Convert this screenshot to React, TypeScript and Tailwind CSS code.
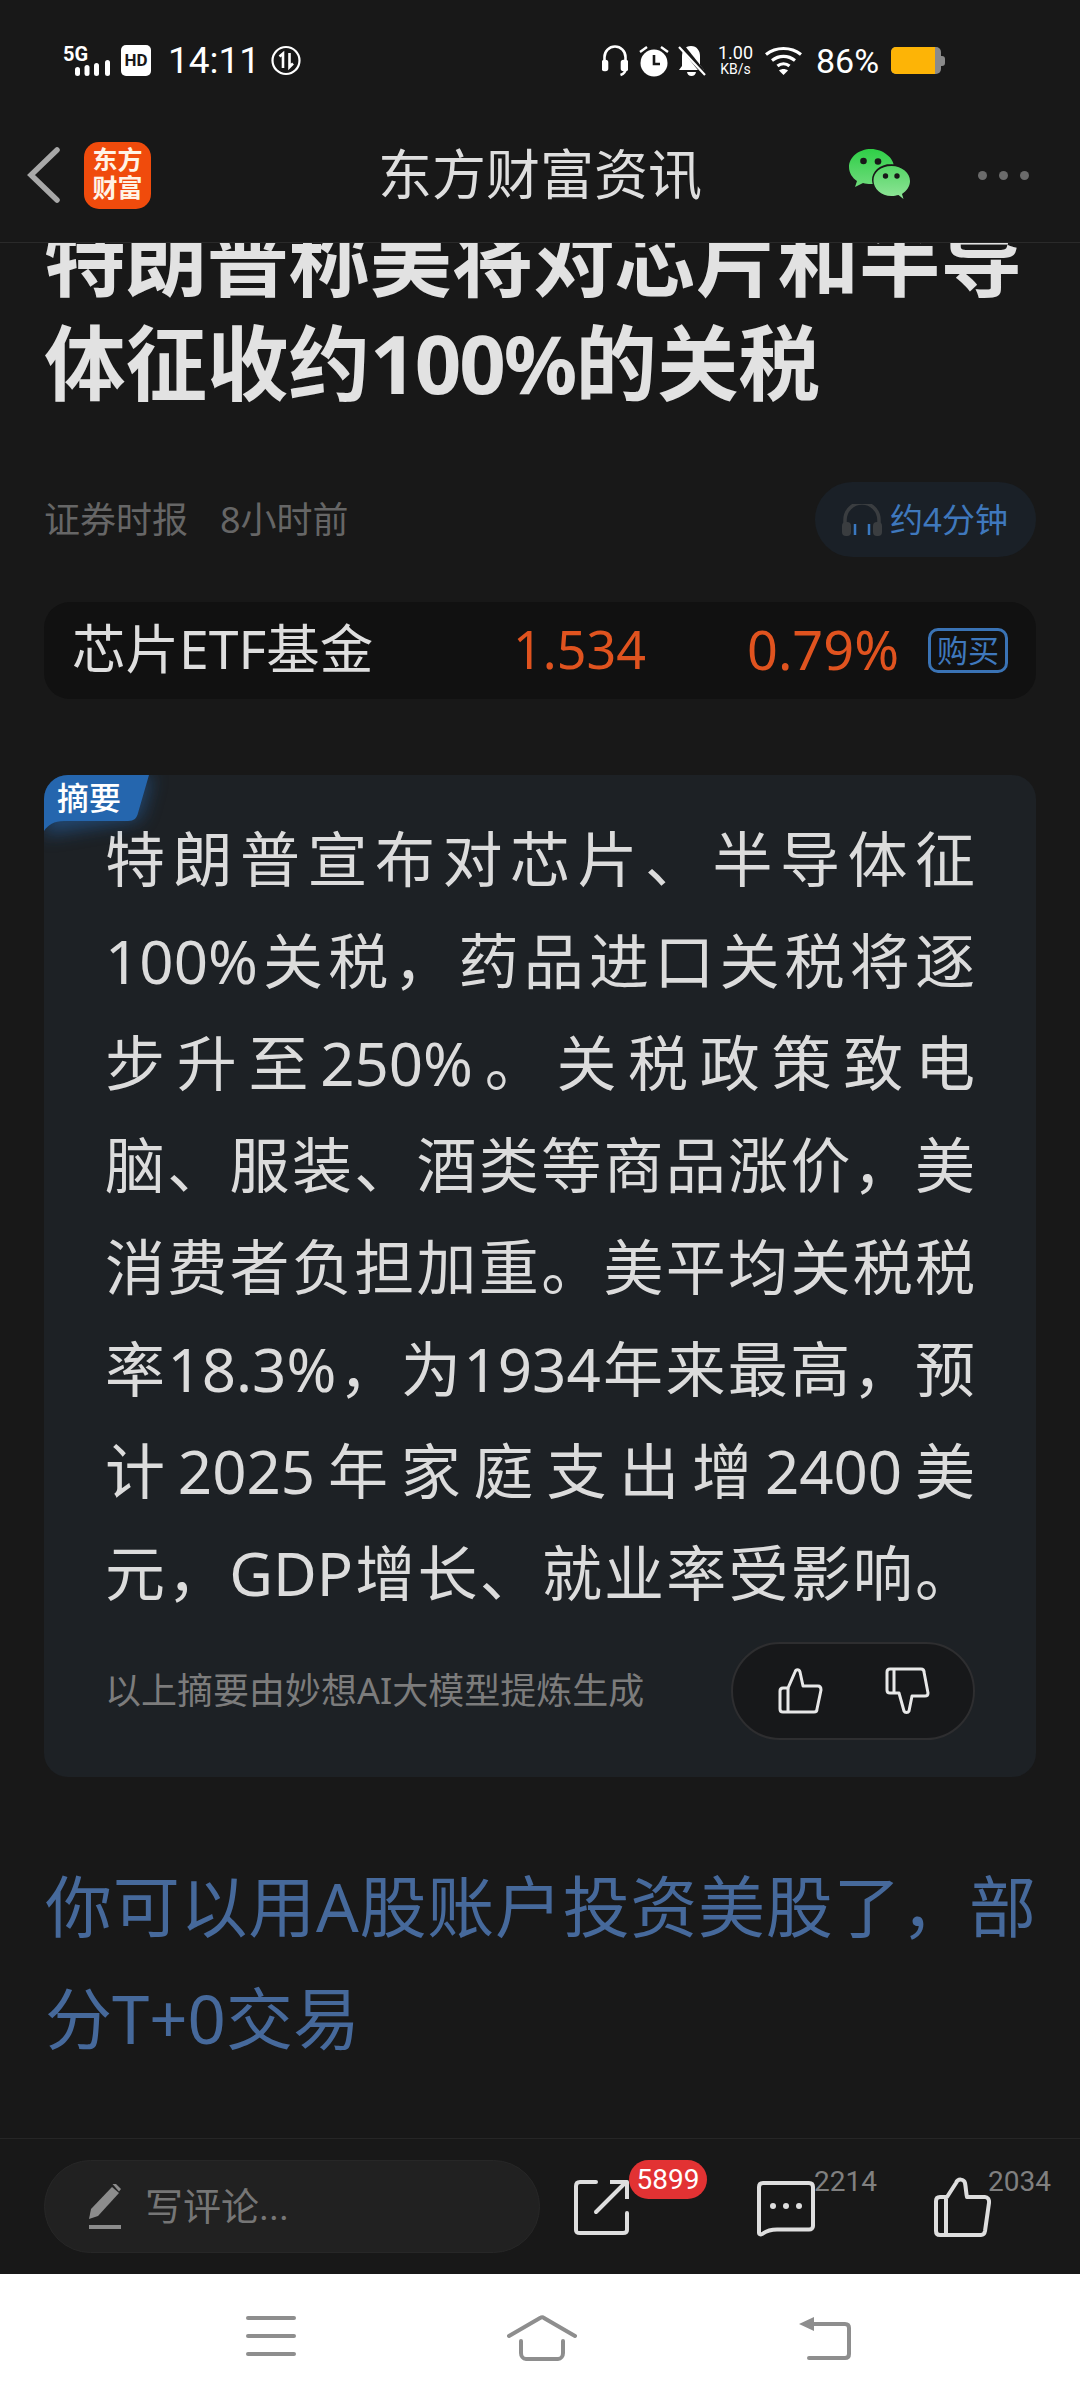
const SUMMARY_LINES = [
  '特朗普宣布对芯片、半导体征',
  '100%关税，药品进口关税将逐',
  '步升至250%。关税政策致电',
  '脑、服装、酒类等商品涨价，美',
  '消费者负担加重。美平均关税税',
  '率18.3%，为1934年来最高，预',
  '计2025年家庭支出增2400美',
  '元，GDP增长、就业率受影响。',
]

function StatusBar() {
  return (
    <div className="h-[108px] shrink-0 flex items-start justify-between pt-[44px] pl-[63px] pr-[135px] text-white">
      <div className="flex items-center">
        <svg className="overflow-visible" width="48" height="32" viewBox="0 0 48 32" fill="white">
          <text x="0" y="15.500" fontSize="20" fontWeight="700" fontFamily="Roboto, sans-serif">5G</text>
          <rect x="12" y="22" width="5" height="9" rx="2.500" />
          <rect x="21.500" y="20" width="5" height="11" rx="2.500" />
          <rect x="31" y="18" width="5" height="13" rx="2.500" />
          <rect x="42" y="15" width="5" height="16" rx="2.500" />
        </svg>
        <div className="ml-[10px] w-[30px] h-[31px] rounded-[5px] bg-white flex items-center justify-center text-[#181818] text-[17px] font-bold leading-none">HD</div>
        <span className="ml-[17px] text-[37px] leading-[33px] w-[88px]">14:11</span>
        <svg className="ml-[15px]" width="30" height="31" viewBox="0 0 30 31" fill="none" stroke="white" strokeWidth="2.200">
          <circle cx="15" cy="15.500" r="13.500" />
          <path d="M12 23V8.500L8.500 11.500M18.500 8v14l3.500-3.500" strokeWidth="2.600" />
        </svg>
      </div>
      <div className="flex items-center">
        <svg width="26" height="32" viewBox="0 0 26 32" fill="none" stroke="white" strokeWidth="2.600">
          <path d="M2.500 20V12a10.500 10.500 0 0 1 21 0v12c0 3-2 5-5 6" />
          <rect x="1" y="16" width="4" height="9" rx="1.500" fill="white" />
          <rect x="20" y="16" width="5" height="9" rx="1.500" fill="white" />
        </svg>
        <svg className="ml-[10px]" width="32" height="32" viewBox="0 0 32 32">
          <circle cx="16" cy="18" r="13.500" fill="white" />
          <path d="M16 10v9h6" fill="none" stroke="#181818" strokeWidth="2.600" />
          <path d="M2 7l7-5M30 7l-7-5" stroke="white" strokeWidth="2.400" />
        </svg>
        <svg className="ml-[8px]" width="28" height="32" viewBox="0 0 28 32">
          <path d="M13 1c6 0 9 5 9 10v9l4 5H1l3-4v-10c0-5 3-10 9-10zM9 27h9c-.5 2.500-2 4-4.500 4S9.500 29.500 9 27z" fill="white" />
          <path d="M3 0l24 30" stroke="#181818" strokeWidth="5" />
          <path d="M1 2l26 28" stroke="white" strokeWidth="2.200" />
        </svg>
        <div className="ml-[11px] w-[37px] flex flex-col items-center">
          <span className="text-[18px] leading-[18px]">1.00</span>
          <span className="text-[14px] leading-[15px]">KB/s</span>
        </div>
        <svg className="ml-[11px]" width="37" height="30" viewBox="0 0 37 30" fill="none" stroke="white" strokeWidth="3.200">
          <path d="M1 8.500C11 .5 26 .5 36 8.500" />
          <path d="M7 14.500c7-5.500 16-5.500 23 0" />
          <path d="M12.500 20c3.500-3 8.500-3 12 0" />
          <path d="M18.500 29l-4.500-4.500c2.500-2 6.500-2 9 0z" fill="white" stroke="none" />
        </svg>
        <span className="ml-[14px] text-[34px] leading-[32px] w-[62px]">86%</span>
        <div className="ml-[13px] flex items-center">
          <div className="w-[50px] h-[27px] rounded-[5px] bg-[#8a8a8a] overflow-hidden">
            <div className="w-[44px] h-full bg-[#fdb406]" />
          </div>
          <div className="w-[4px] h-[10px] rounded-r-[3px] bg-[#8a8a8a]" />
        </div>
      </div>
    </div>
  )
}

function NavBar() {
  return (
    <div className="relative h-[135px] shrink-0 flex items-center border-b border-[#2a2a2a]">
      <svg className="ml-[27px]" width="33" height="56" viewBox="0 0 33 56" fill="none" stroke="#a8a8a8" strokeWidth="5.500" strokeLinecap="round">
        <path d="M30 3L4 28l26 25" />
      </svg>
      <div className="ml-[24px] w-[67px] h-[67px] rounded-[15px] bg-[#f04b0c] flex flex-col items-center justify-center text-[#fff3e6] text-[25px] leading-[28px] font-bold">
        <span>东方</span>
        <span>财富</span>
      </div>
      <div className="absolute left-0 right-0 top-[33px] text-center text-[54px] leading-[72px] text-[#dedede]">东方财富资讯</div>
      <svg className="ml-auto" width="62" height="52" viewBox="0 0 62 52">
        <defs>
          <linearGradient id="wxa" x1="0" y1="0" x2="0" y2="1">
            <stop offset="0" stopColor="#2fcf47" />
            <stop offset="1" stopColor="#6fdc7c" />
          </linearGradient>
          <linearGradient id="wxb" x1="0" y1="0" x2="0" y2="1">
            <stop offset="0" stopColor="#55d566" />
            <stop offset="1" stopColor="#90e598" />
          </linearGradient>
        </defs>
        <path d="M22 0C10 0 0 8 0 18c0 6 3.500 11 8 14l-2 6 8-4c2.500.7 5 1 8 1 12 0 23-8 23-17S34 0 22 0z" fill="url(#wxa)" />
        <circle cx="14.500" cy="12" r="3.300" fill="#181818" />
        <circle cx="29" cy="12.500" r="3.300" fill="#181818" />
        <path d="M42.500 15C30 15 23 23 23 31s8 16 19.500 16c2.500 0 4.500-.3 6.500-1l6 4-1.500-5.500c4.500-3 8-7.500 8-13.500 0-8-8.500-16-19.500-16z" fill="#181818" />
        <path d="M42.500 17C31.500 17 24.500 23.500 24.500 31.500S32 47 42.500 47c2.500 0 5-.5 7-1l5 4-1.500-5c4.500-3 8-7.500 8-13 0-8-8-15-18.500-15z" fill="url(#wxb)" />
        <circle cx="36.500" cy="27" r="2.700" fill="#181818" />
        <circle cx="48" cy="27" r="2.700" fill="#181818" />
      </svg>
      <div className="ml-[67px] mr-[51px] flex gap-[12px]">
        <div className="w-[9px] h-[9px] rounded-full bg-[#6b6b6b]" />
        <div className="w-[9px] h-[9px] rounded-full bg-[#6b6b6b]" />
        <div className="w-[9px] h-[9px] rounded-full bg-[#6b6b6b]" />
      </div>
    </div>
  )
}

function ThumbUp({ className }: { className?: string }) {
  return (
    <svg className={className} width="46" height="46" viewBox="0 0 46 46" fill="none" stroke="#e8e8e8" strokeWidth="3" strokeLinejoin="round">
      <path d="M11 20h-5c-2 0-3 1-3 3v18c0 2 1 3 3 3h31c2 0 3-1 3-3l4-19c0-2-1-4-3-4H26l-3-14c-1-3-4-3-5 0z" />
      <path d="M11 20v24" />
    </svg>
  )
}

function ThumbDown({ className }: { className?: string }) {
  return (
    <svg className={className} width="48" height="48" viewBox="0 0 48 48" fill="none" stroke="#e8e8e8" strokeWidth="3" strokeLinejoin="round">
      <path d="M4 5c0-2 1-3 3-3h31c2 0 3 1 3 3l4 21c0 2-1 3-3 3H29l-3 15c-1 2-4 2-5 0l-5-18H7c-2 0-3-1-3-3z" />
      <path d="M11 3v23" />
    </svg>
  )
}

function Summary() {
  return (
    <div className="relative mt-[76px] mx-[44px] h-[1002px] rounded-[24px] bg-[#1d2125] pt-[33px] pl-[61px] pr-[61px] overflow-hidden">
      {/* tag */}
      <svg className="absolute left-0 top-0" width="170" height="110" viewBox="0 0 170 110">
        <defs>
          <filter id="tagBlur" x="-30%" y="-30%" width="160%" height="160%">
            <feGaussianBlur stdDeviation="9" />
          </filter>
        </defs>
        <path d="M0 0H108L96 44 0 60z" fill="#2566ae" opacity="0.55" filter="url(#tagBlur)" />
        <path d="M0 0H105L94 38c-1 5-4 8-10 8H20C10 46 4 50 0 56z" fill="#2566ae" />
      </svg>
      <span className="absolute left-[13px] top-[3px] text-[32px] leading-[40px] text-white font-medium">摘要</span>
      <div className="text-[60px] leading-[102px] text-[#dcdcdc]">
        {SUMMARY_LINES.map((line) => (
          <div key={line} className="text-justify [text-align-last:justify] whitespace-nowrap">{line}</div>
        ))}
      </div>
      <div className="mt-[18px] flex items-center justify-between">
        <span className="text-[36px] leading-[46px] text-[#7c7c7c]">以上摘要由妙想AI大模型提炼生成</span>
        <div className="w-[244px] h-[98px] rounded-full bg-[#17181a] border-2 border-[#2e2e30] flex items-center pl-[44px]">
          <ThumbUp />
          <ThumbDown className="ml-[60px]" />
        </div>
      </div>
    </div>
  )
}

function BottomBar() {
  return (
    <div className="relative h-[136px] shrink-0 border-t border-[#262626] bg-[#181818] flex items-center pl-[44px]">
      <div className="w-[496px] h-[93px] rounded-full bg-[#212121] border border-[#272727] flex items-center pl-[43px]">
        <svg width="34" height="46" viewBox="0 0 34 46" fill="#8c8c8c">
          <path d="M24 3l7 6-21 23-9 3 2-10z" />
          <path d="M24.500 0l2.500-1 6 6-2 2.500z" />
          <rect x="1" y="41" width="32" height="4" />
        </svg>
        <span className="ml-[23px] text-[38px] leading-[48px] text-[#767676]">写评论...</span>
      </div>
      <svg className="ml-[34px]" width="56" height="56" viewBox="0 0 56 56" fill="none" stroke="#dedede" strokeWidth="4" strokeLinecap="round" strokeLinejoin="round">
        <path d="M22 3H6C3.500 3 2 4.500 2 7v44c0 2.500 1.500 3 4 3h43c2 0 4-.5 4-3V34" />
        <path d="M22 33L52 3" />
        <path d="M36 3h17v17" strokeLinecap="butt" />
      </svg>
      <div className="absolute left-[629px] top-[21px] w-[78px] h-[39px] rounded-full bg-[#e23233] flex items-center justify-center text-[28px] leading-none text-white">5899</div>
      <svg className="ml-[127px] mt-[6px]" width="58" height="58" viewBox="0 0 58 58" fill="none" stroke="#dedede" strokeWidth="4" strokeLinejoin="round">
        <path d="M6 2h46c2.500 0 4 1.500 4 4v39c0 2-1.500 3.500-4 3.500H20c-6 0-10 1-14 4-2 1.500-4 1-4-1V6c0-2.500 1.500-4 4-4z" />
        <circle cx="16" cy="25" r="3" fill="#dedede" stroke="none" />
        <circle cx="29" cy="25" r="3" fill="#dedede" stroke="none" />
        <circle cx="42" cy="25" r="3" fill="#dedede" stroke="none" />
      </svg>
      <span className="absolute left-[814px] top-[25px] text-[28px] leading-[36px] text-[#808080]">2214</span>
      <svg className="ml-[119px]" width="57" height="60" viewBox="0 0 57 60" fill="none" stroke="#dedede" strokeWidth="4" strokeLinejoin="round">
        <path d="M13 20H6c-3 0-4 1.500-4 4v30c0 2.500 1.500 4 4 4h41c2.500 0 3.500-1 4-4l4-28c.5-3.500-1.500-6-4-6H33c-1-4-1-9-2-14-1-4-7-5-9 0z" />
        <path d="M12 22v35" />
      </svg>
      <span className="absolute left-[988px] top-[25px] text-[28px] leading-[36px] text-[#808080]">2034</span>
    </div>
  )
}

function SystemNav() {
  return (
    <div className="h-[126px] shrink-0 bg-white flex items-start pt-[41px] pl-[246px]">
      <div className="w-[50px] flex flex-col gap-[14px] mt-[1px]">
        <div className="h-[4px] rounded-full bg-[#8e8e8e]" />
        <div className="h-[4px] rounded-full bg-[#8e8e8e]" />
        <div className="h-[4px] rounded-full bg-[#8e8e8e]" />
      </div>
      <svg className="ml-[211px]" width="70" height="46" viewBox="0 0 70 46" fill="none" stroke="#8e8e8e" strokeWidth="4" strokeLinecap="round">
        <path d="M2 21L33 3c1.500-.8 3-.8 4 0l31 18" />
        <path d="M14 26v12c0 3 2 6 5 6h32c3 0 5-3 5-6V26" />
      </svg>
      <svg className="ml-[222px]" width="52" height="46" viewBox="0 0 52 46" fill="none" stroke="#8e8e8e" strokeWidth="4" strokeLinecap="round">
        <path d="M10 9h36c2.500 0 4 1.500 4 4v26c0 3-1.500 4-4 4H10" />
        <path d="M15 2v14L0 9z" fill="#8e8e8e" stroke="none" />
      </svg>
    </div>
  )
}

export default function App() {
  return (
    <div
      className="w-[1080px] h-[2400px] flex flex-col bg-[#181818] overflow-hidden"
      style={{ fontFamily: 'Roboto, "Noto Sans CJK SC", sans-serif' }}
    >
      <StatusBar />
      <NavBar />
      <div className="flex-1 min-h-0 overflow-hidden [font-family:'Noto_Sans','Noto_Sans_CJK_SC',sans-serif]">
        <h1 className="-mt-[36px] px-[44px] text-[81.500px] leading-[104px] font-bold text-[#e2e2e2]">
          <div>特朗普称美将对芯片和半导</div>
          <div>体征收约<span className="tracking-[-2px]">100%</span>的关税</div>
        </h1>
        <div className="mt-[67px] mx-[44px] flex items-center justify-between">
          <div className="flex text-[36px] leading-[48px] text-[#666666]">
            <span>证券时报</span>
            <span className="ml-[32px]">8小时前</span>
          </div>
          <div className="w-[221px] h-[75px] rounded-full bg-[#1a2027] flex items-center pl-[26px]">
            <svg width="42" height="32" viewBox="0 0 42 32" fill="none">
              <path d="M4 26V16a17 17 0 0 1 34 0v10" stroke="#3a3d40" strokeWidth="3.500" />
              <rect x="1" y="18" width="9" height="14" rx="4" fill="#3a3d40" />
              <rect x="32" y="18" width="9" height="14" rx="4" fill="#3a3d40" />
              <path d="M14 20v11M28 20v11" stroke="#3a78c0" strokeWidth="2.500" />
            </svg>
            <span className="ml-[7px] text-[33px] leading-[42px] text-[#3f78bd]">约4分钟</span>
          </div>
        </div>
        <div className="mt-[45px] mx-[44px] h-[97px] rounded-[26px] bg-[#111111] flex items-center pl-[28px] pr-[28px]">
          <span className="w-[441px] -mt-[3px] text-[53.500px] leading-[64px] text-[#dedede]">芯片ETF基金</span>
          <span className="w-[234px] -mt-[3px] text-[52px] leading-[64px] text-[#e0531f]">1.534</span>
          <span className="w-[181px] -mt-[3px] text-[54px] leading-[64px] text-[#e0531f]">0.79%</span>
          <span className="w-[80px] h-[45px] rounded-[10px] border-[3px] border-[#3a73b5] flex items-center justify-center text-[31px] leading-none text-[#3f78bd]">购买</span>
        </div>
        <Summary />
        <div className="mt-[73px] pl-[45px] pr-[44px] text-[67px] leading-[112px] text-[#46699b]">
          <div className="text-justify [text-align-last:justify] whitespace-nowrap">你可以用A股账户投资美股了，部</div>
          <div>分T+0交易</div>
        </div>
      </div>
      <BottomBar />
      <SystemNav />
    </div>
  )
}
